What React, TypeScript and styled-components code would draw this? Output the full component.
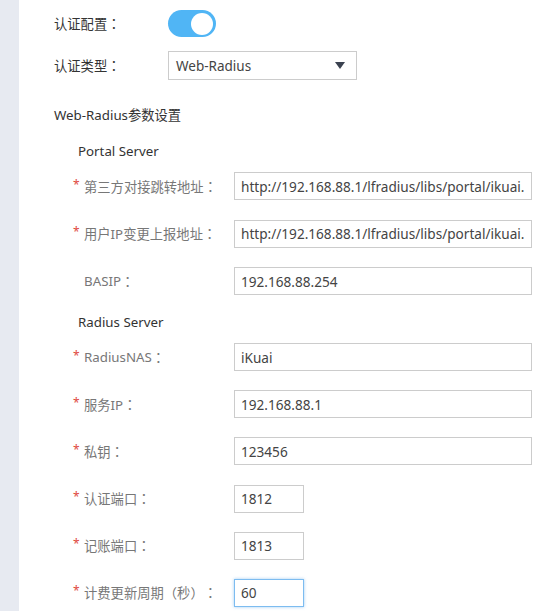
import React from "react";
import styled, { createGlobalStyle } from "styled-components";

const Global = createGlobalStyle`
  html, body { margin: 0; padding: 0; background: #fff; }
  body { font-family: "Noto Sans", "Noto Sans CJK SC", sans-serif; }
  * { box-sizing: border-box; }
`;

const FONT = `"Noto Sans", "Noto Sans CJK SC", sans-serif`;

const Page = styled.div`
  display: flex;
  width: 535px;
  height: 611px;
  overflow: hidden;
`;

const Sidebar = styled.div`
  width: 19px;
  flex: none;
  background: #e7eaf1;
`;

const Main = styled.div`
  flex: 1;
  padding: 10px 0 0 35px;
  display: flex;
  flex-direction: column;
  font-family: ${FONT};
  font-size: 13.3px;
  color: #333;
`;

const TopRow = styled.div<{ $mt?: number; $h: number }>`
  display: flex;
  align-items: center;
  height: ${(p) => p.$h}px;
  margin-top: ${(p) => p.$mt ?? 0}px;
`;

const TopLabel = styled.div`
  width: 114px;
  flex: none;
  color: #333;
  font-size: 13.3px;
`;

const Punct = styled.span`
  font-family: "Noto Sans CJK TC", "Noto Sans CJK SC", sans-serif;
`;

const Toggle = styled.div<{ $on: boolean }>`
  width: 48px;
  height: 27px;
  border-radius: 14px;
  background: ${(p) => (p.$on ? "#50b5f5" : "#ccc")};
  display: flex;
  align-items: center;
  justify-content: ${(p) => (p.$on ? "flex-end" : "flex-start")};
  padding: 0 3px;
`;

const Knob = styled.div`
  width: 22px;
  height: 22px;
  border-radius: 50%;
  background: #fff;
`;

const Select = styled.div`
  width: 189px;
  height: 29px;
  border: 1px solid #ccc;
  display: flex;
  align-items: center;
  justify-content: space-between;
  padding: 0 11px 0 7px;
  color: #444;
  font-size: 13.5px;
`;

const Caret = styled.span`
  width: 0;
  height: 0;
  border-left: 5px solid transparent;
  border-right: 5px solid transparent;
  border-top: 7px solid #3a4250;
`;

const Heading = styled.div<{ $mt: number; $indent?: number }>`
  height: 20px;
  line-height: 20px;
  margin-top: ${(p) => p.$mt}px;
  padding-left: ${(p) => p.$indent ?? 0}px;
  color: #333;
  font-size: 13.3px;
`;

const Group = styled.div<{ $mt: number; $gap: number }>`
  display: flex;
  flex-direction: column;
  gap: ${(p) => p.$gap}px;
  margin-top: ${(p) => p.$mt}px;
  padding-left: 19px;
`;

const FieldRow = styled.div`
  display: flex;
  align-items: center;
  height: 28px;
`;

const FieldLabel = styled.div`
  width: 161px;
  flex: none;
  display: flex;
  align-items: center;
  white-space: nowrap;
  color: #777;
  font-size: 13.3px;
`;

const Star = styled.span<{ $show: boolean }>`
  width: 11px;
  flex: none;
  color: #e0483e;
  font-size: 12px;
  visibility: ${(p) => (p.$show ? "visible" : "hidden")};
  position: relative;
  top: -2px;
`;

const Input = styled.input<{ $w: number; $focused?: boolean }>`
  width: ${(p) => p.$w}px;
  height: 28px;
  border: 1px solid ${(p) => (p.$focused ? "#7dbcf0" : "#ccc")};
  box-shadow: ${(p) => (p.$focused ? "0 0 3px rgba(100,170,235,0.6)" : "none")};
  outline: none;
  padding: 0 6px;
  font-family: ${FONT};
  font-size: 13.6px;
  color: #444;
  background: #fff;
`;

type Field = { label: React.ReactNode; key: string; value: string; req: boolean; w: number; focused?: boolean };

const portal: Field[] = [
  { key: "a", label: "第三方对接跳转地址", value: "http://192.168.88.1/lfradius/libs/portal/ikuai.php", req: true, w: 298 },
  { key: "b", label: "用户IP变更上报地址", value: "http://192.168.88.1/lfradius/libs/portal/ikuai.php", req: true, w: 298 },
  { key: "c", label: "BASIP", value: "192.168.88.254", req: false, w: 298 },
];

const radius: Field[] = [
  { key: "d", label: "RadiusNAS", value: "iKuai", req: true, w: 298 },
  { key: "e", label: "服务IP", value: "192.168.88.1", req: true, w: 298 },
  { key: "f", label: "私钥", value: "123456", req: true, w: 298 },
  { key: "g", label: "认证端口", value: "1812", req: true, w: 70 },
  { key: "h", label: "记账端口", value: "1813", req: true, w: 70 },
  {
    key: "i",
    label: (
      <>
        计费更新周期<Punct>（</Punct>秒<Punct>）</Punct>
      </>
    ),
    value: "60",
    req: true,
    w: 70,
    focused: true,
  },
];

const Rows = ({ items }: { items: Field[] }) => (
  <>
    {items.map((f) => (
      <FieldRow key={f.key}>
        <FieldLabel>
          <Star $show={f.req}>*</Star>
          {f.label}
          <Punct>：</Punct>
        </FieldLabel>
        <Input $w={f.w} $focused={f.focused} value={f.value} readOnly />
      </FieldRow>
    ))}
  </>
);

export default function App() {
  return (
    <Page>
      <Global />
      <Sidebar />
      <Main>
        <TopRow $h={27}>
          <TopLabel>
            认证配置<Punct>：</Punct>
          </TopLabel>
          <Toggle $on>
            <Knob />
          </Toggle>
        </TopRow>
        <TopRow $h={29} $mt={14}>
          <TopLabel>
            认证类型<Punct>：</Punct>
          </TopLabel>
          <Select>
            <span>Web-Radius</span>
            <Caret />
          </Select>
        </TopRow>
        <Heading $mt={25}>Web-Radius参数设置</Heading>
        <Heading $mt={16} $indent={24}>Portal Server</Heading>
        <Group $mt={11} $gap={19.5}>
          <Rows items={portal} />
        </Group>
        <Heading $mt={17} $indent={24}>Radius Server</Heading>
        <Group $mt={11} $gap={19.2}>
          <Rows items={radius} />
        </Group>
      </Main>
    </Page>
  );
}
